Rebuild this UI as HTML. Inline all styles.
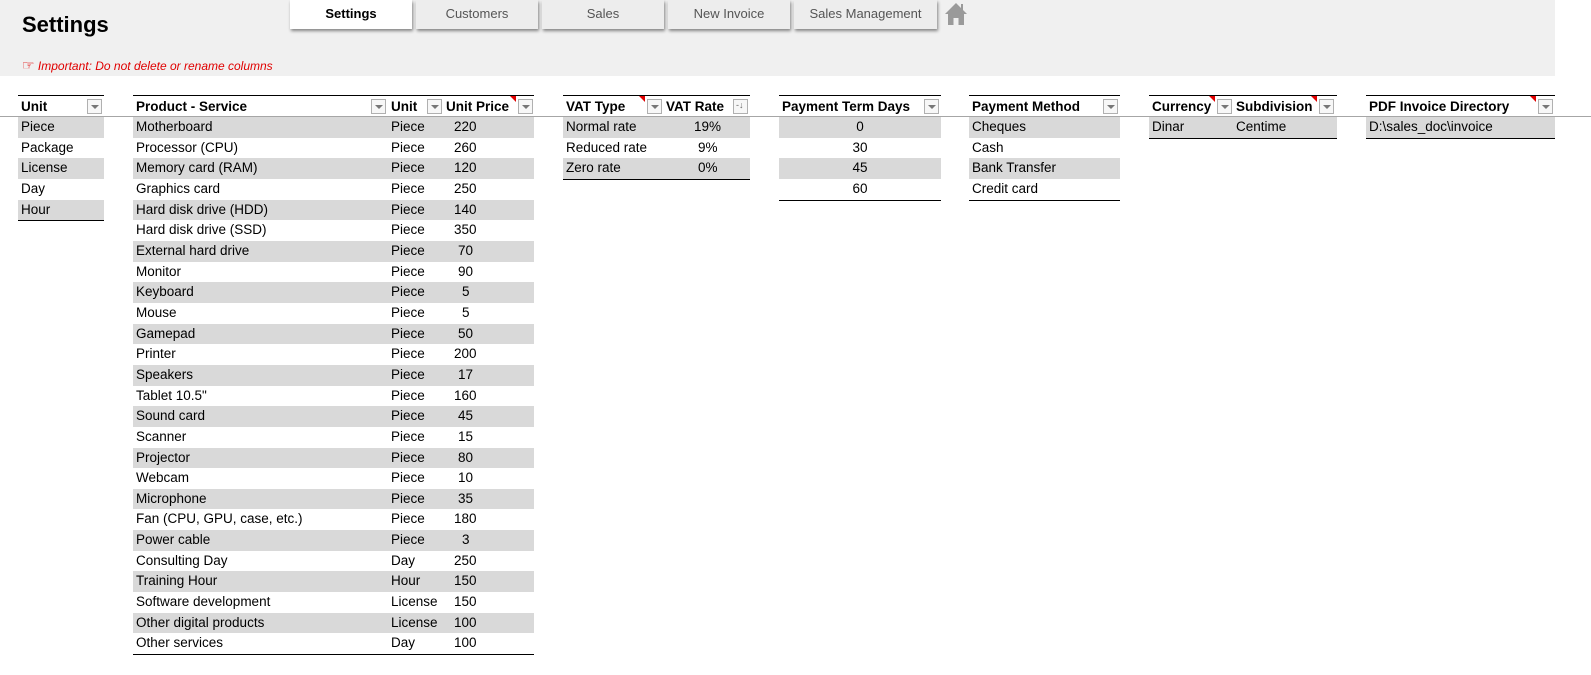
<!DOCTYPE html>
<html><head><meta charset="utf-8">
<style>
*{margin:0;padding:0;box-sizing:border-box}
body{width:1591px;height:675px;background:#fff;font-family:"Liberation Sans",sans-serif;font-size:13.5px;color:#000;position:relative;overflow:hidden}
.band{position:absolute;left:0;top:0;width:1555px;height:76px;background:#f0f0f0}
.title{position:absolute;left:22px;top:12px;font-size:22px;font-weight:bold}
.warn{position:absolute;left:22px;top:57px;font-size:12px;font-style:italic;color:#e00000}
.warn b{font-size:14px;font-weight:normal;font-style:normal}
.tab{position:absolute;top:0;height:29px;background:#ededed;box-shadow:1px 2px 3px rgba(0,0,0,.45);text-align:center;line-height:27px;font-size:13px;color:#555}
.tab.on{background:#fff;color:#000;font-weight:bold}
.hline{position:absolute;left:0;top:116px;width:1591px;height:1px;background:#a6a6a6}
.t{position:absolute;top:95px;border-top:1px solid #000}
.hd{height:21px;position:relative;font-weight:bold;white-space:nowrap}
.hd span{position:absolute;top:3px}
.dd{position:absolute;top:3px;width:15px;height:15px;border:1px solid #b0b0b0;background:#f7f7f7}
.dd:after{content:"";position:absolute;left:3px;top:5px;border-left:4px solid transparent;border-right:4px solid transparent;border-top:4px solid #777}
.so:after{display:none}
.rc{position:absolute;top:0;width:0;height:0;border-left:6px solid transparent;border-top:6px solid #e00000}
.r{height:20.67px;position:relative;white-space:nowrap;line-height:20px}
.r:nth-child(odd){background:#d9d9d9}
.r span{position:absolute;top:0}
.b{border-bottom:1px solid #000}
.c{text-align:center}
</style></head><body>
<div class="band"></div>
<div class="title">Settings</div>
<div class="warn"><b>☞</b> Important: Do not delete or rename columns</div>
<div class="tab on" style="left:290px;width:122px">Settings</div>
<div class="tab" style="left:416px;width:122px">Customers</div>
<div class="tab" style="left:542px;width:122px">Sales</div>
<div class="tab" style="left:668px;width:122px">New Invoice</div>
<div class="tab" style="left:794px;width:143px">Sales Management</div>
<svg style="position:absolute;left:944px;top:2px" width="24" height="24" viewBox="0 0 24 24"><path d="M12 1 L1 12 H4 V23 H9.5 V16 H14.5 V23 H20 V12 H23 L19 8 V2 H17 V6 Z" fill="#9a9a9a"/></svg>
<div class="hline"></div>

<div class="t" style="left:18px;width:86px">
<div class="hd"><span style="left:3px">Unit</span><div class="dd" style="left:69px"></div></div>
<div class="b">
<div class="r"><span style="left:3px">Piece</span></div>
<div class="r"><span style="left:3px">Package</span></div>
<div class="r"><span style="left:3px">License</span></div>
<div class="r"><span style="left:3px">Day</span></div>
<div class="r"><span style="left:3px">Hour</span></div>
</div></div>

<div class="t" style="left:133px;width:401px">
<div class="hd"><span style="left:3px">Product - Service</span><div class="dd" style="left:238px"></div>
<span style="left:258px">Unit</span><div class="dd" style="left:294px"></div>
<span style="left:313px">Unit Price</span><div class="rc" style="left:377px"></div><div class="dd" style="left:385px"></div></div>
<div class="b">
<div class="r"><span style="left:3px">Motherboard</span><span style="left:258px">Piece</span><span style="left:321px">220</span></div>
<div class="r"><span style="left:3px">Processor (CPU)</span><span style="left:258px">Piece</span><span style="left:321px">260</span></div>
<div class="r"><span style="left:3px">Memory card (RAM)</span><span style="left:258px">Piece</span><span style="left:321px">120</span></div>
<div class="r"><span style="left:3px">Graphics card</span><span style="left:258px">Piece</span><span style="left:321px">250</span></div>
<div class="r"><span style="left:3px">Hard disk drive (HDD)</span><span style="left:258px">Piece</span><span style="left:321px">140</span></div>
<div class="r"><span style="left:3px">Hard disk drive (SSD)</span><span style="left:258px">Piece</span><span style="left:321px">350</span></div>
<div class="r"><span style="left:3px">External hard drive</span><span style="left:258px">Piece</span><span style="left:325px">70</span></div>
<div class="r"><span style="left:3px">Monitor</span><span style="left:258px">Piece</span><span style="left:325px">90</span></div>
<div class="r"><span style="left:3px">Keyboard</span><span style="left:258px">Piece</span><span style="left:329px">5</span></div>
<div class="r"><span style="left:3px">Mouse</span><span style="left:258px">Piece</span><span style="left:329px">5</span></div>
<div class="r"><span style="left:3px">Gamepad</span><span style="left:258px">Piece</span><span style="left:325px">50</span></div>
<div class="r"><span style="left:3px">Printer</span><span style="left:258px">Piece</span><span style="left:321px">200</span></div>
<div class="r"><span style="left:3px">Speakers</span><span style="left:258px">Piece</span><span style="left:325px">17</span></div>
<div class="r"><span style="left:3px">Tablet 10.5"</span><span style="left:258px">Piece</span><span style="left:321px">160</span></div>
<div class="r"><span style="left:3px">Sound card</span><span style="left:258px">Piece</span><span style="left:325px">45</span></div>
<div class="r"><span style="left:3px">Scanner</span><span style="left:258px">Piece</span><span style="left:325px">15</span></div>
<div class="r"><span style="left:3px">Projector</span><span style="left:258px">Piece</span><span style="left:325px">80</span></div>
<div class="r"><span style="left:3px">Webcam</span><span style="left:258px">Piece</span><span style="left:325px">10</span></div>
<div class="r"><span style="left:3px">Microphone</span><span style="left:258px">Piece</span><span style="left:325px">35</span></div>
<div class="r"><span style="left:3px">Fan (CPU, GPU, case, etc.)</span><span style="left:258px">Piece</span><span style="left:321px">180</span></div>
<div class="r"><span style="left:3px">Power cable</span><span style="left:258px">Piece</span><span style="left:329px">3</span></div>
<div class="r"><span style="left:3px">Consulting Day</span><span style="left:258px">Day</span><span style="left:321px">250</span></div>
<div class="r"><span style="left:3px">Training Hour</span><span style="left:258px">Hour</span><span style="left:321px">150</span></div>
<div class="r"><span style="left:3px">Software development</span><span style="left:258px">License</span><span style="left:321px">150</span></div>
<div class="r"><span style="left:3px">Other digital products</span><span style="left:258px">License</span><span style="left:321px">100</span></div>
<div class="r"><span style="left:3px">Other services</span><span style="left:258px">Day</span><span style="left:321px">100</span></div>
</div></div>

<div class="t" style="left:563px;width:187px">
<div class="hd"><span style="left:3px">VAT Type</span><div class="rc" style="left:76px"></div><div class="dd" style="left:84px"></div>
<span style="left:103px">VAT Rate</span><div class="dd so" style="left:170px"><span style="font-size:9px;font-weight:normal;left:2px;top:0;color:#666">-↓</span></div></div>
<div class="b">
<div class="r"><span style="left:3px">Normal rate</span><span style="left:131px">19%</span></div>
<div class="r"><span style="left:3px">Reduced rate</span><span style="left:135px">9%</span></div>
<div class="r"><span style="left:3px">Zero rate</span><span style="left:135px">0%</span></div>
</div></div>

<div class="t" style="left:779px;width:162px">
<div class="hd"><span style="left:3px">Payment Term Days</span><div class="dd" style="left:145px"></div></div>
<div class="b">
<div class="r c">0</div>
<div class="r c">30</div>
<div class="r c">45</div>
<div class="r c">60</div>
</div></div>

<div class="t" style="left:969px;width:151px">
<div class="hd"><span style="left:3px">Payment Method</span><div class="dd" style="left:134px"></div></div>
<div class="b">
<div class="r"><span style="left:3px">Cheques</span></div>
<div class="r"><span style="left:3px">Cash</span></div>
<div class="r"><span style="left:3px">Bank Transfer</span></div>
<div class="r"><span style="left:3px">Credit card</span></div>
</div></div>

<div class="t" style="left:1149px;width:188px">
<div class="hd"><span style="left:3px">Currency</span><div class="rc" style="left:60px"></div><div class="dd" style="left:68px"></div>
<span style="left:87px">Subdivision</span><div class="rc" style="left:162px"></div><div class="dd" style="left:170px"></div></div>
<div class="b">
<div class="r"><span style="left:3px">Dinar</span><span style="left:87px">Centime</span></div>
</div></div>

<div class="t" style="left:1366px;width:189px">
<div class="hd"><span style="left:3px">PDF Invoice Directory</span><div class="rc" style="left:164px"></div><div class="dd" style="left:172px"></div></div>
<div class="b">
<div class="r"><span style="left:3px">D:\sales_doc\invoice</span></div>
</div></div>
</body></html>
